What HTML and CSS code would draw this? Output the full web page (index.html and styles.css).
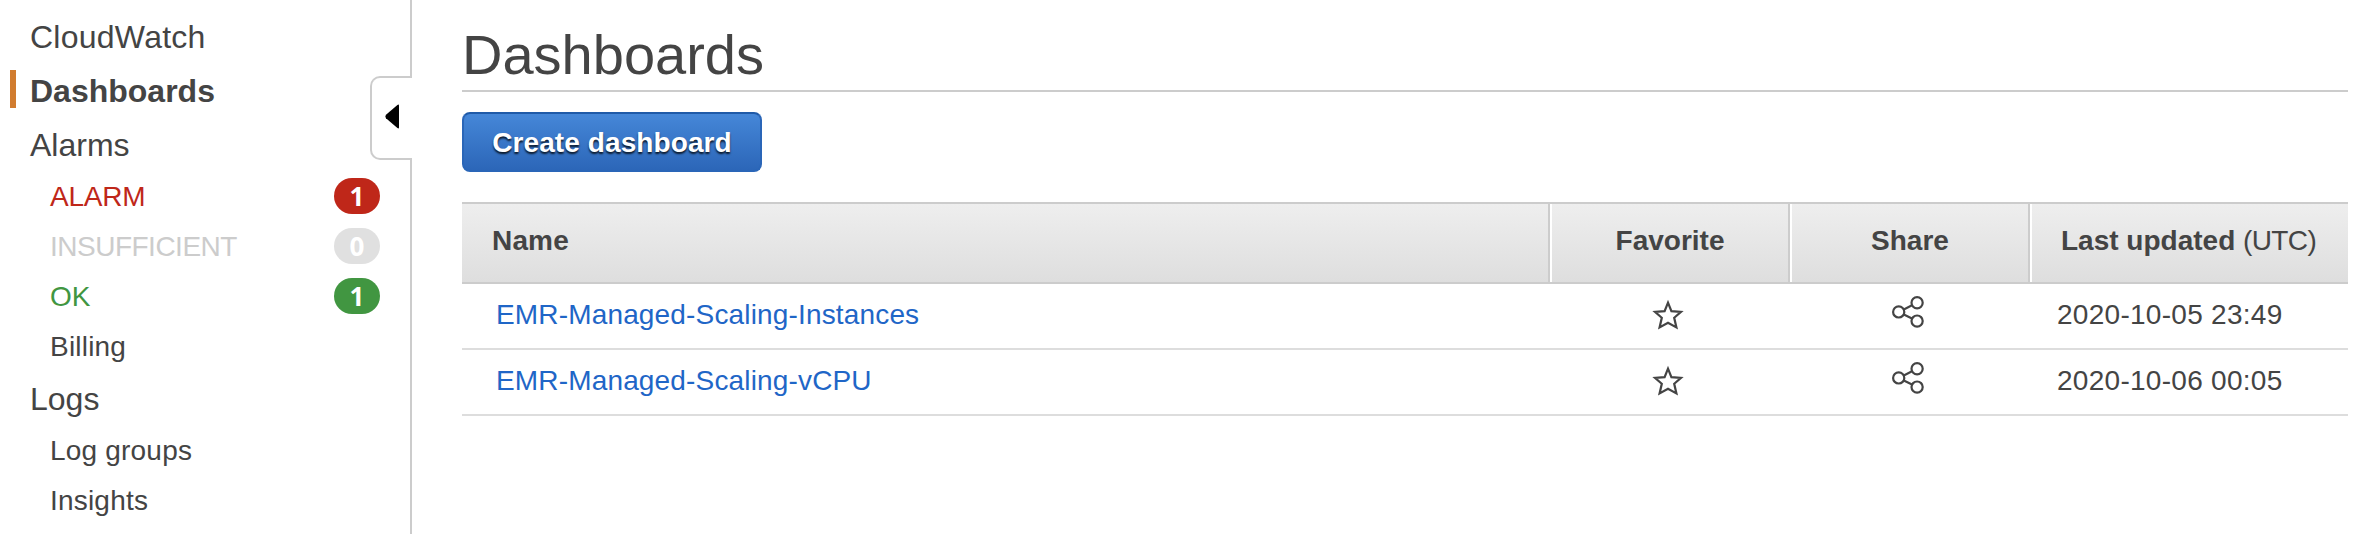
FILE: index.html
```html
<!DOCTYPE html>
<html lang="en">
<head>
<meta charset="utf-8">
<title>CloudWatch Dashboards</title>
<link rel="stylesheet" href="styles.css">
</head>
<body>
<svg class="defs" width="0" height="0" aria-hidden="true">
  <symbol id="star" viewBox="0 0 32 32">
    <path d="M16 3.6 L19.4 12.1 L29 12.8 L22.2 18.8 L24.4 28.4 L16 23.7 L7.6 28.4 L9.8 18.8 L3 12.8 L12.6 12.1 Z"/>
  </symbol>
  <symbol id="share" viewBox="0 0 32 32">
    <circle cx="6.7" cy="15.9" r="5.6"/><circle cx="25.1" cy="6.7" r="5.6"/><circle cx="25.1" cy="25.1" r="5.6"/>
    <path d="M11.8 13.4 L20 9.3 M11.8 18.4 L20 22.5"/>
  </symbol>
</svg>
<div class="app">
  <nav class="sidebar">
    <a class="item brand">CloudWatch</a>
    <a class="item active">Dashboards</a>
    <a class="item">Alarms</a>
    <a class="sub alarm">ALARM<span class="badge">1</span></a>
    <a class="sub insufficient">INSUFFICIENT<span class="badge">0</span></a>
    <a class="sub ok">OK<span class="badge">1</span></a>
    <a class="sub">Billing</a>
    <a class="item">Logs</a>
    <a class="sub">Log groups</a>
    <a class="sub">Insights</a>
    <button class="toggle" aria-label="Collapse navigation">
      <svg width="16" height="26" viewBox="0 0 16 26"><path d="M15 1.5 V23.5 Q15 25 13.4 24 L2 14.2 Q0.6 12.5 2 10.8 L13.4 1 Q15 0 15 1.5Z"/></svg>
    </button>
  </nav>
  <main class="main">
    <h1>Dashboards</h1>
    <button class="create">Create dashboard</button>
    <div class="table">
      <div class="row head">
        <div class="name">Name</div>
        <div class="center">Favorite</div>
        <div class="center">Share</div>
        <div class="updated"><span>Last updated <span class="zone">(UTC)</span></span></div>
      </div>
      <div class="row">
        <a class="name">EMR-Managed-Scaling-Instances</a>
        <div class="center"><svg class="icon star"><use href="#star"/></svg></div>
        <div class="center"><svg class="icon share"><use href="#share"/></svg></div>
        <div class="updated">2020-10-05 23:49</div>
      </div>
      <div class="row">
        <a class="name">EMR-Managed-Scaling-vCPU</a>
        <div class="center"><svg class="icon star"><use href="#star"/></svg></div>
        <div class="center"><svg class="icon share"><use href="#share"/></svg></div>
        <div class="updated">2020-10-06 00:05</div>
      </div>
    </div>
  </main>
</div>
</body>
</html>
```
FILE: styles.css
```css
* { box-sizing: border-box; }
body {
  margin: 0;
  background: #fff;
  color: #444;
  font: 28px "Liberation Sans", Arial, sans-serif;
}
.defs { display: block; width: 0; height: 0; }
.app { display: flex; height: 534px; overflow: hidden; }

.sidebar {
  position: relative;
  width: 412px;
  flex: none;
  padding: 10px 0 0 30px;
  border-right: 2px solid #ccc;
}
.item, .sub { display: flex; align-items: center; }
.item { height: 54px; font-size: 32px; }
.brand { letter-spacing: .25px; }
.sub { height: 50px; padding: 0 30px 0 20px; justify-content: space-between; letter-spacing: .2px; }
.active { position: relative; font-weight: bold; }
.active::before {
  content: "";
  position: absolute;
  left: -20px;
  top: 6px;
  width: 6px;
  height: 38px;
  background: #d17c2f;
}
.badge {
  width: 46px;
  height: 36px;
  margin-bottom: 2px;
  border-radius: 18px;
  color: #fff;
  font: bold 26px/36px "Open Sans", sans-serif;
  letter-spacing: 0;
  text-align: center;
}
.alarm { color: #bf2719; letter-spacing: -.2px; }
.alarm .badge { background: #bf2719; }
.insufficient { color: #ccc; letter-spacing: -.5px; }
.insufficient .badge { background: #e0e0e0; }
.ok { color: #419641; letter-spacing: 0; }
.ok .badge { background: #419641; }

.toggle {
  position: absolute;
  right: -2px;
  top: 76px;
  width: 42px;
  height: 84px;
  padding: 0 0 2px 12px;
  display: flex;
  align-items: center;
  border: 2px solid #ccc;
  border-right: 0;
  border-radius: 10px 0 0 10px;
  background: #fff;
}

.main { flex: 1; padding: 0 18px 0 50px; }
h1 {
  height: 92px;
  margin: 0 0 20px;
  padding: 23px 0 0;
  border-bottom: 2px solid #ccc;
  font-size: 56px;
  font-weight: normal;
  line-height: 64px;
}
.create {
  display: block;
  width: 300px;
  height: 60px;
  margin-bottom: 30px;
  padding: 1px 0 0;
  border: 2px solid #2a66b8;
  border-top-color: #1f5aa8;
  border-radius: 8px;
  background: linear-gradient(#4688d9, #2b65b7) border-box;
  color: #fff;
  font: bold 28px "Liberation Sans", Arial, sans-serif;
  letter-spacing: .1px;
  text-shadow: 0 2px 2px rgba(0, 0, 0, .8);
}

.row {
  display: grid;
  grid-template-columns: 1088px 240px 240px 1fr;
  height: 66px;
  border-bottom: 2px solid #ddd;
}
.row > * { display: flex; align-items: center; padding-bottom: 2px; }
.row .center { justify-content: center; padding-right: 4px; }
.row .name { padding-left: 34px; color: #1f66c7; letter-spacing: .16px; }
.row .updated { padding-left: 27px; letter-spacing: .28px; }
.row.head {
  height: 82px;
  border-top: 2px solid #ccc;
  border-bottom-color: #ccc;
  background: linear-gradient(#eee, #dedede);
  font-weight: bold;
}
.head > * { padding-bottom: 4px; border-right: 2px solid #ccc; }
.head > * + * { border-left: 2px solid #fff; }
.head > :last-child { border-right: 0; }
.head .center { padding-right: 0; }
.head .name { padding-left: 30px; color: inherit; }
.head .updated { padding-left: 29px; letter-spacing: 0; }
.zone { font-weight: normal; letter-spacing: -.6px; }
.icon { width: 32px; height: 32px; fill: none; stroke: #444; stroke-width: 2.2; }
.share { margin-bottom: 6px; }
```
